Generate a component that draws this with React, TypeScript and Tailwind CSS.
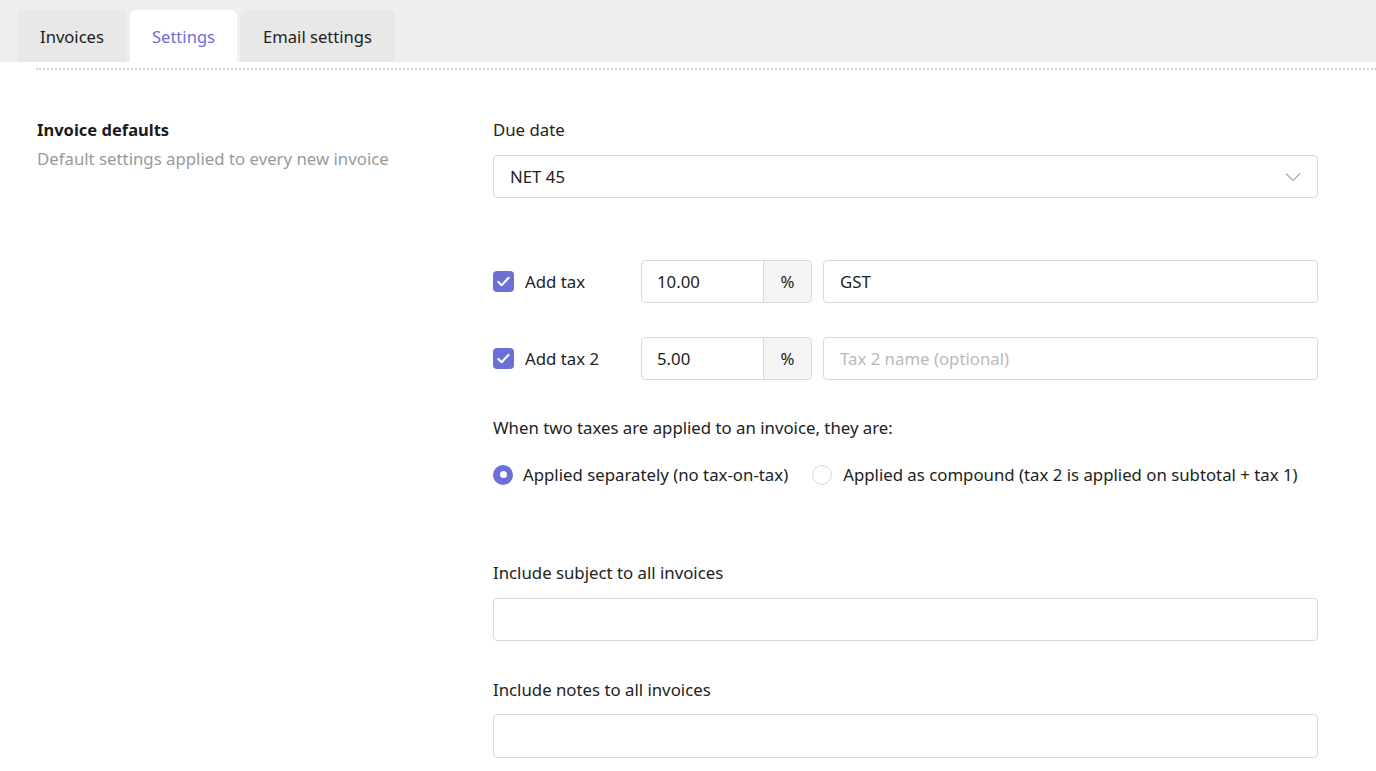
import { useState } from "react";

function Checkbox({ checked }: { checked: boolean }) {
    return (
        <span
            className={
                checked
                    ? "flex h-[21px] w-[21px] items-center justify-center rounded-[4px] bg-[#6b6fd6]"
                    : "flex h-[21px] w-[21px] items-center justify-center rounded-[4px] border border-[#d4d4d4] bg-white"
            }
        >
            {checked && (
                <svg width="15" height="15" viewBox="0 0 16 16" fill="none">
                    <path d="M2.5 8.5l3.5 3.5 7.5-8" stroke="white" strokeWidth="2.2" strokeLinecap="round" strokeLinejoin="round" />
                </svg>
            )}
        </span>
    );
}

function Radio({ checked }: { checked: boolean }) {
    return checked ? (
        <span className="flex h-[20px] w-[20px] items-center justify-center rounded-full bg-[#6b6fd6]">
            <span className="h-[7px] w-[7px] rounded-full bg-white" />
        </span>
    ) : (
        <span className="h-[20px] w-[20px] rounded-full border border-[#dadada] bg-white" />
    );
}

function TaxRow({ label, rate, name, placeholder }: { label: string; rate: string; name: string; placeholder: string }) {
    return (
        <div className="flex h-[43px] items-center">
            <div className="flex w-[148px] items-center gap-[11px]">
                <Checkbox checked />
                <span>{label}</span>
            </div>
            <div className="flex h-full w-[171px] rounded-[4px] border border-[#d9d9d9]">
                <div className="flex flex-1 items-center px-[15px]">{rate}</div>
                <div className="flex w-[48px] items-center justify-center rounded-r-[4px] border-l border-[#d9d9d9] bg-[#f4f4f4]">%</div>
            </div>
            <div className="ml-[11px] flex h-full flex-1 items-center rounded-[4px] border border-[#d9d9d9] px-[16px]">
                {name ? <span>{name}</span> : <span className="text-[#b9b9b9]">{placeholder}</span>}
            </div>
        </div>
    );
}

export default function App() {
    const [tab] = useState("Settings");
    const tabs = ["Invoices", "Settings", "Email settings"];

    return (
        <div className="min-h-screen bg-white text-[16.8px] text-[#222222]" style={{ fontFamily: "'Noto Sans', 'Open Sans', sans-serif" }}>
            <div className="flex h-[62px] items-end gap-[3px] bg-[#efefef] pl-[17px]">
                {tabs.map((t) => (
                    <div
                        key={t}
                        className={
                            t === tab
                                ? "flex h-[52px] items-center rounded-t-[6px] bg-white px-[22px] pt-[2px] text-[16.6px] text-[#6b6fd6]"
                                : "flex h-[52px] items-center rounded-t-[6px] bg-[#e8e8e8] px-[23px] pt-[2px] text-[16.6px] text-[#222222]"
                        }
                    >
                        {t}
                    </div>
                ))}
            </div>
            <div className="ml-[36px] mt-[6px] border-t-2 border-dotted border-[#d4d4d8]" />

            <div className="flex pl-[37px] pt-[48px]">
                <div className="w-[456px]">
                    <div className="text-[16.5px] font-bold leading-6 text-[#1a1a1a]">Invoice defaults</div>
                    <div className="mt-[5px] leading-6 text-[#9a9a9a]">Default settings applied to every new invoice</div>
                </div>

                <div className="w-[825px]">
                    <div className="leading-6">Due date</div>
                    <div className="mt-[13px] flex h-[43px] items-center justify-between rounded-[4px] border border-[#d9d9d9] pl-[16px] pr-[16px]">
                        <span>NET 45</span>
                        <svg width="16" height="10" viewBox="0 0 16 10" fill="none">
                            <path d="M1 1.5l7 7 7-7" stroke="#a8a8a8" strokeWidth="1.2" />
                        </svg>
                    </div>

                    <div className="mt-[62px]">
                        <TaxRow label="Add tax" rate="10.00" name="GST" placeholder="" />
                    </div>
                    <div className="mt-[34px]">
                        <TaxRow label="Add tax 2" rate="5.00" name="" placeholder="Tax 2 name (optional)" />
                    </div>

                    <div className="mt-[36px] leading-6">When two taxes are applied to an invoice, they are:</div>
                    <div className="mt-[22px] flex items-center">
                        <div className="flex items-center gap-[10px]">
                            <Radio checked />
                            <span>Applied separately (no tax-on-tax)</span>
                        </div>
                        <div className="ml-[24px] flex items-center gap-[11px]">
                            <Radio checked={false} />
                            <span>Applied as compound (tax 2 is applied on subtotal + tax 1)</span>
                        </div>
                    </div>

                    <div className="mt-[74px] leading-6">Include subject to all invoices</div>
                    <div className="mt-[13px] h-[43px] rounded-[4px] border border-[#d9d9d9]" />

                    <div className="mt-[37px] leading-6">Include notes to all invoices</div>
                    <div className="mt-[12px] h-[44px] rounded-[4px] border border-[#d9d9d9]" />
                </div>
            </div>
        </div>
    );
}
